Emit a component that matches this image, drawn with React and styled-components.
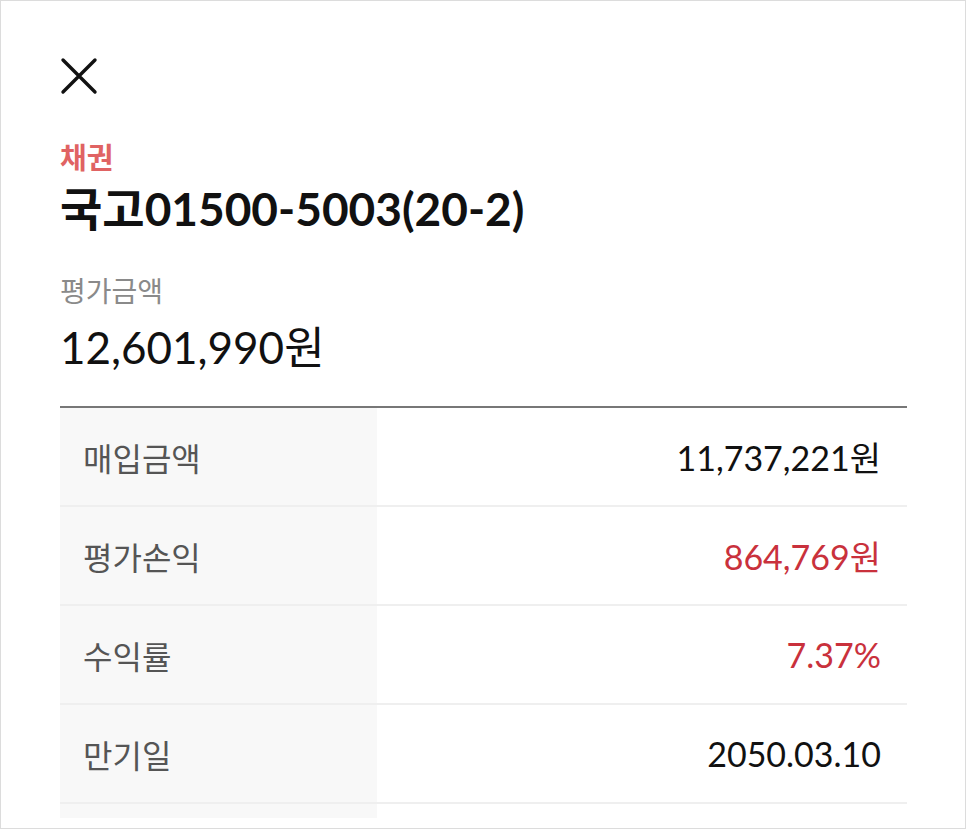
import React from 'react';
import styled, { createGlobalStyle } from 'styled-components';

const GlobalStyle = createGlobalStyle`
  html, body {
    margin: 0;
    padding: 0;
    background: #fff;
  }
  body {
    font-family: Lato, "Noto Sans CJK KR", sans-serif;
    color: #111;
  }
`;

const rows = [
  { label: '매입금액', value: '11,737,221원' },
  { label: '평가손익', value: '864,769원', red: true },
  { label: '수익률', value: '7.37%', red: true },
  { label: '만기일', value: '2050.03.10' },
];

const App = () => {
  return (
    <Frame>
      <GlobalStyle />
      <Sheet>
        <CloseButton type="button" aria-label="닫기">
          <svg width="38" height="38" viewBox="0 0 38 38">
            <path d="M3 3 L35 35 M35 3 L3 35" stroke="#111" strokeWidth="3.4" strokeLinecap="round" fill="none" />
          </svg>
        </CloseButton>
        <Category>채권</Category>
        <Title>국고01500-5003(20-2)</Title>
        <FieldLabel>평가금액</FieldLabel>
        <Amount>12,601,990원</Amount>
        <Table>
          {rows.map((row) => (
            <Row key={row.label}>
              <Label>{row.label}</Label>
              <Value $red={row.red}>{row.value}</Value>
            </Row>
          ))}
          {/* next row, scrolled below the fold */}
          <Row>
            <Label />
            <Value />
          </Row>
        </Table>
      </Sheet>
    </Frame>
  );
};

const Frame = styled.div`
  box-sizing: border-box;
  width: 966px;
  height: 829px;
  border: 1px solid #dcdcdc;
  overflow: hidden;
`;

const Sheet = styled.div`
  height: 817px;
  overflow: hidden;
  padding: 0 58px 0 59px;
  display: flex;
  flex-direction: column;
`;

const CloseButton = styled.button`
  margin-top: 56px;
  padding: 0;
  width: 38px;
  height: 38px;
  border: none;
  background: transparent;
  display: flex;
  align-items: center;
  justify-content: center;
  cursor: pointer;
`;

const Category = styled.div`
  margin-top: 44px;
  font-family: "Noto Sans CJK KR", sans-serif;
  font-size: 29px;
  line-height: 34px;
  font-weight: 700;
  color: #e06363;
`;

const Title = styled.h1`
  margin: 8px 0 0;
  font-size: 46px;
  line-height: 56px;
  font-weight: 700;
  color: #111;
`;

const FieldLabel = styled.div`
  margin-top: 36px;
  font-family: "Noto Sans CJK KR", sans-serif;
  font-size: 28px;
  line-height: 34px;
  color: #8a8a8a;
`;

const Amount = styled.div`
  margin-top: 13px;
  font-size: 44px;
  line-height: 54px;
  color: #111;
`;

const Table = styled.div`
  margin-top: 32px;
  border-top: 2px solid #777;
  display: flex;
  flex-direction: column;
  flex-shrink: 0;
`;

const Row = styled.div`
  display: grid;
  grid-template-columns: 317px 1fr;
  height: 97px;
  border-bottom: 2px solid #efefef;
`;

const Label = styled.div`
  display: flex;
  align-items: center;
  padding-left: 23px;
  background: #f8f8f8;
  font-family: "Noto Sans CJK KR", sans-serif;
  font-size: 32px;
  color: #555;
`;

const Value = styled.div`
  display: flex;
  align-items: center;
  justify-content: flex-end;
  padding-right: 26px;
  font-size: 34px;
  color: ${(p) => (p.$red ? '#c9313c' : '#111')};
`;

export default App;
